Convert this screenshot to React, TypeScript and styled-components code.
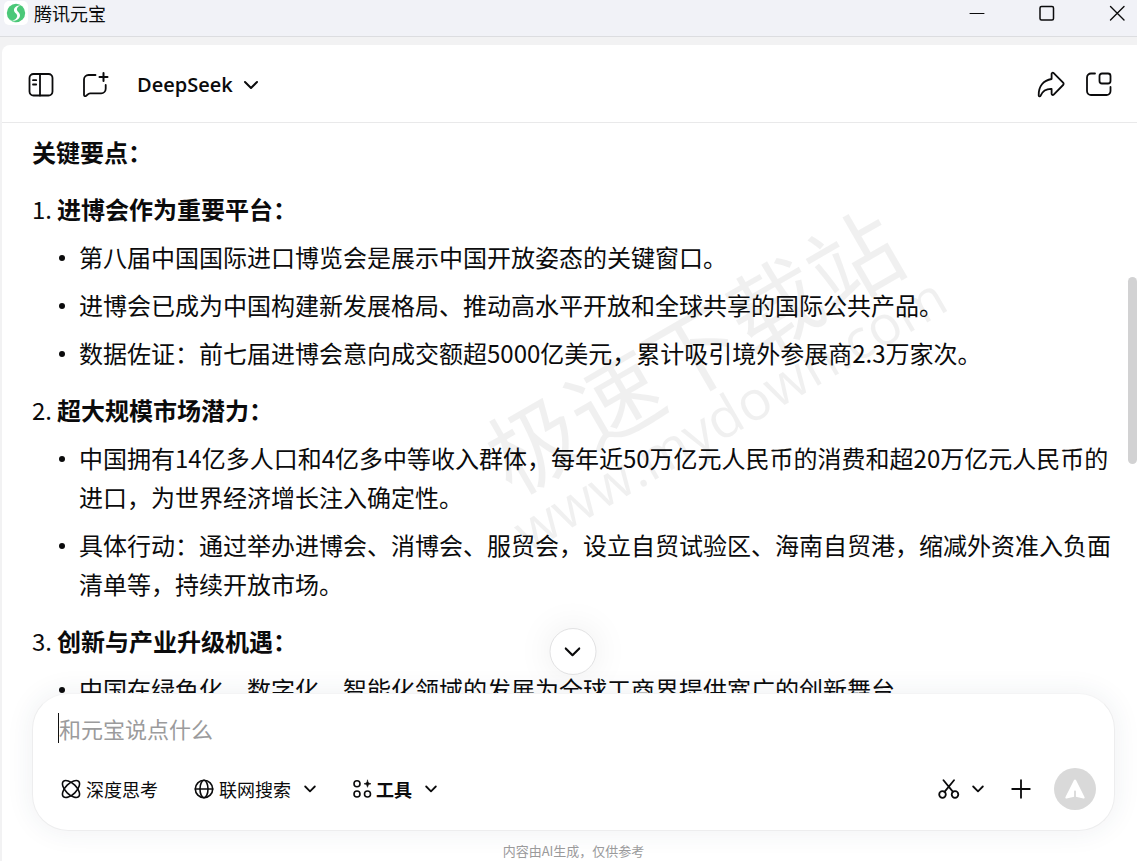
import React from "react";
import styled, { createGlobalStyle } from "styled-components";

const GlobalStyle = createGlobalStyle`
  * { box-sizing: border-box; }
  body {
    margin: 0;
    background: #f2f2f3;
    color: #0b0b0c;
    font-family: "Noto Sans CJK SC", sans-serif;
  }
  button {
    border: 0;
    padding: 0;
    background: none;
    color: inherit;
    font: inherit;
    cursor: pointer;
  }
  svg { display: block; flex: none; }
`;

const Window = styled.div`
  display: flex;
  flex-direction: column;
  height: 100vh;
  overflow: hidden;
`;

const TitleBar = styled.header`
  display: flex;
  flex: none;
  align-items: center;
  justify-content: space-between;
  height: 37px;
  padding: 0 12px 10px 4px;
  background: #f1f2f7;
  border-bottom: 1px solid #dcdde0;
`;

const AppName = styled.div`
  display: flex;
  align-items: center;
  gap: 6px;
  font-size: 18px;
  line-height: 26px;
`;

const WindowControls = styled.div`
  display: flex;
  align-items: center;
  gap: 54px;
`;

const IconButton = styled.button`
  display: flex;
  align-items: center;
  justify-content: center;
`;

const Panel = styled.main`
  display: flex;
  flex: 1;
  flex-direction: column;
  min-height: 0;
  margin: 8px 0 0 2px;
  background: #fff;
  border-top-left-radius: 8px;
`;

const Toolbar = styled.div`
  display: flex;
  flex: none;
  align-items: center;
  justify-content: space-between;
  height: 78px;
  padding: 2px 24px 0 26px;
  border-bottom: 1px solid #e9e9ea;
`;

const ToolbarGroup = styled.div<{ $gap: number }>`
  display: flex;
  align-items: center;
  gap: ${(p) => p.$gap}px;
`;

const ModelButton = styled.button`
  display: flex;
  align-items: center;
  gap: 10px;
  font-family: "Open Sans", sans-serif;
  font-size: 20px;
  font-weight: 600;
  line-height: 28px;
`;

const Conversation = styled.section`
  position: relative;
  flex: 1;
  min-height: 0;
`;

const Answer = styled.article`
  height: 100%;
  overflow: hidden;
  padding: 9px 23px 0 30px;
  font-size: 24px;
  line-height: 39px;
`;

const Lead = styled.h2`
  margin: 0;
  font-size: 24px;
  font-weight: 700;
`;

const Points = styled.ol`
  margin: 0;
  padding: 0;
  list-style: none;
`;

const Point = styled.li`
  margin-top: 18px;
`;

const PointTitle = styled.h3`
  display: flex;
  margin: 0;
  font-size: 24px;
  font-weight: 700;
`;

const PointNumber = styled.span`
  flex: none;
  width: 25px;
  font-weight: 400;
`;

const Details = styled.ul`
  margin: 0;
  padding: 0;
  list-style: none;
`;

const Detail = styled.li`
  display: flex;
  gap: 14px;
  margin-top: 9px;
  padding-left: 27px;

  &::before {
    content: "";
    flex: none;
    width: 6px;
    height: 6px;
    margin-top: 18px;
    border-radius: 50%;
    background: #0b0b0c;
  }
`;

const Watermark = styled.div`
  position: absolute;
  top: 250px;
  left: 704px;
  color: rgba(0, 0, 0, 0.06);
  text-align: center;
  white-space: nowrap;
  pointer-events: none;
  transform: translate(-50%, -50%) rotate(-30deg);
`;

const WatermarkName = styled.div`
  font-size: 92px;
  line-height: 92px;
`;

const WatermarkSite = styled.div`
  font-family: "Open Sans", sans-serif;
  font-size: 55px;
  line-height: 58px;
`;

const ScrollThumb = styled.div`
  position: absolute;
  top: 154px;
  right: 0;
  width: 9px;
  height: 187px;
  border-radius: 5px;
  background: #d2d2d3;
`;

const ScrollDown = styled.button`
  position: absolute;
  bottom: 18px;
  left: calc(50% + 3px);
  display: flex;
  align-items: center;
  justify-content: center;
  width: 47px;
  height: 47px;
  background: #fff;
  border: 1px solid #e2e2e3;
  border-radius: 50%;
  box-shadow: 0 0 36px rgba(0, 0, 0, 0.08);
  transform: translateX(-50%);
`;

const Footer = styled.footer`
  position: relative;
  flex: none;
  padding: 0 22px 0 30px;
`;

const Composer = styled.form`
  padding: 19px 18px 20px 25px;
  background: #fff;
  border: 1px solid #ededee;
  border-top-color: #f4f4f5;
  border-radius: 36px;
  box-shadow: 0 0 28px rgba(40, 70, 90, 0.08);
`;

const Prompt = styled.input`
  display: block;
  width: 100%;
  height: 30px;
  padding: 0;
  border: 0;
  border-left: 1px solid #111;
  outline: 0;
  background: none;
  color: #0b0b0c;
  font-family: inherit;
  font-size: 22px;

  &::placeholder { color: #9b9b9c; opacity: 1; }
`;

const Actions = styled.div`
  display: flex;
  align-items: center;
  justify-content: space-between;
  margin-top: 25px;
`;

const ModeGroup = styled.div`
  display: flex;
  gap: 36px;
  padding-left: 3px;
`;

const ModeButton = styled.button<{ $bold?: boolean }>`
  display: flex;
  align-items: center;
  font-size: 18px;
  font-weight: ${(p) => (p.$bold ? 700 : 400)};
  line-height: 26px;

  span { margin-left: ${(p) => (p.$bold ? 4 : 5)}px; }
  span + svg { margin-left: 13px; }
`;

const SendGroup = styled.div`
  display: flex;
  align-items: center;
  gap: 22px;
`;

const SnipButton = styled(IconButton)`
  gap: 12px;
  margin-right: 4px;
`;

const SendButton = styled(IconButton)`
  width: 42px;
  height: 42px;
  border-radius: 50%;
  background: #d9d9d9;
`;

const Notice = styled.p`
  margin: 10px 0 1px;
  color: #9a9a9b;
  font-size: 13px;
  line-height: 19px;
  text-align: center;
`;

type IconProps = {
  w: number;
  h: number;
  stroke?: number;
  children: React.ReactNode;
};

const Icon = ({ w, h, stroke = 2, children }: IconProps) => (
  <svg
    width={w}
    height={h}
    viewBox={`0 0 ${w} ${h}`}
    fill="none"
    stroke="currentColor"
    strokeWidth={stroke}
    strokeLinecap="round"
    strokeLinejoin="round"
    aria-hidden="true"
  >
    {children}
  </svg>
);

const Chevron = ({ large }: { large?: boolean }) =>
  large ? (
    <Icon w={16} h={10} stroke={2.2}>
      <path d="M1.2 1.5 8 8.2l6.800-6.700" />
    </Icon>
  ) : (
    <Icon w={12} h={8} stroke={1.8}>
      <path d="M1.200 1.500 6 6.300l4.800-4.800" />
    </Icon>
  );

const Logo = () => (
  <svg width="24" height="24" viewBox="0 0 24 24" aria-hidden="true">
    <rect width="24" height="24" rx="5" fill="#fff" />
    <circle cx="12" cy="12" r="9.200" fill="#4bc878" />
    <path
      d="M17 4.200C12 4.300 9.800 6.800 10 9.500c.2 2.500 3.400 3 3.200 5.600-.1 2.300-2.200 4.100-5.200 4.700 4.600.2 8-1.900 8-5.500 0-3-3.200-3.500-3.100-6 .1-1.900 1.700-3.500 4.100-4.100Z"
      fill="#fff"
    />
    <path d="M5 17.800c1.700 2.300 4.400 3.600 7.500 3.400-2.800-.6-5.200-1.500-7.500-3.400Z" fill="#a9efc2" />
  </svg>
);

const points = [
  {
    title: "进博会作为重要平台：",
    details: [
      "第八届中国国际进口博览会是展示中国开放姿态的关键窗口。",
      "进博会已成为中国构建新发展格局、推动高水平开放和全球共享的国际公共产品。",
      "数据佐证：前七届进博会意向成交额超5000亿美元，累计吸引境外参展商2.3万家次。",
    ],
  },
  {
    title: "超大规模市场潜力：",
    details: [
      "中国拥有14亿多人口和4亿多中等收入群体，每年近50万亿元人民币的消费和超20万亿元人民币的进口，为世界经济增长注入确定性。",
      "具体行动：通过举办进博会、消博会、服贸会，设立自贸试验区、海南自贸港，缩减外资准入负面清单等，持续开放市场。",
    ],
  },
  {
    title: "创新与产业升级机遇：",
    details: ["中国在绿色化、数字化、智能化领域的发展为全球工商界提供宽广的创新舞台。"],
  },
];

export default function App() {
  return (
    <Window>
      <GlobalStyle />
      <TitleBar>
        <AppName>
          <Logo />
          腾讯元宝
        </AppName>
        <WindowControls>
          <IconButton aria-label="最小化">
            <Icon w={16} h={16} stroke={1}>
              <path d="M1 8.500h14" />
            </Icon>
          </IconButton>
          <IconButton aria-label="最大化">
            <Icon w={16} h={16} stroke={1.5}>
              <rect x="1" y="1.500" width="13.500" height="13.500" rx="1.500" />
            </Icon>
          </IconButton>
          <IconButton aria-label="关闭">
            <Icon w={16} h={16} stroke={1.4}>
              <path d="m1.500 1.500 13.500 13.500M15 1.500 1.500 15" />
            </Icon>
          </IconButton>
        </WindowControls>
      </TitleBar>

      <Panel>
        <Toolbar>
          <ToolbarGroup $gap={28}>
            <IconButton aria-label="侧边栏">
              <Icon w={26} h={26} stroke={1.8}>
                <rect x="1.500" y="2" width="23" height="21.500" rx="4" />
                <path d="M12 2v21.500M5 8.200h3.200M5 12.500h3.200" />
              </Icon>
            </IconButton>
            <IconButton aria-label="新对话">
              <Icon w={27} h={28} stroke={1.8}>
                <path d="M13.500 4H6.500A4.500 4.500 0 0 0 2 8.500V24c0 1.200 1.300 1.500 2.200.8l2.300-1.900c.6-.5 1-.6 1.800-.6h10.900a4.500 4.500 0 0 0 4.500-4.500V14" />
                <path d="M21.500 2v8M17.500 6h8" strokeWidth="2" />
              </Icon>
            </IconButton>
            <ModelButton>
              DeepSeek
              <Icon w={16} h={10} stroke={2}>
                <path d="M2 2l6 6 6-6" />
              </Icon>
            </ModelButton>
          </ToolbarGroup>
          <ToolbarGroup $gap={20}>
            <IconButton aria-label="分享">
              <Icon w={28} h={28} stroke={1.8}>
                <path d="M14.600 2.800c0-1.100 1.300-1.500 2.100-.7l9.400 9.600c.7.700.7 1.600 0 2.300l-9.400 9.600c-.8.800-2.100.4-2.100-.8v-4.900c-5-.2-8.600 1.300-11.100 6.900-.4.900-1.700.7-1.800-.4C1.400 15.400 6.400 9.200 14.600 8Z" />
              </Icon>
            </IconButton>
            <IconButton aria-label="小窗">
              <Icon w={28} h={26} stroke={1.8}>
                <path d="M10 1.500H6A4 4 0 0 0 2 5.500v13.500a4 4 0 0 0 4 4h15.500a4 4 0 0 0 4-4v-4" />
                <rect x="14.500" y="1.500" width="11" height="10" rx="2.500" />
              </Icon>
            </IconButton>
          </ToolbarGroup>
        </Toolbar>

        <Conversation>
          <Answer>
            <Lead>关键要点：</Lead>
            <Points>
              {points.map((point, i) => (
                <Point key={point.title}>
                  <PointTitle>
                    <PointNumber>{i + 1}.</PointNumber>
                    {point.title}
                  </PointTitle>
                  <Details>
                    {point.details.map((text) => (
                      <Detail key={text}>
                        <span>{text}</span>
                      </Detail>
                    ))}
                  </Details>
                </Point>
              ))}
            </Points>
          </Answer>
          <Watermark>
            <WatermarkName>极速下载站</WatermarkName>
            <WatermarkSite>www.mydown.com</WatermarkSite>
          </Watermark>
          <ScrollThumb />
          <ScrollDown aria-label="滚动到底部">
            <Chevron large />
          </ScrollDown>
        </Conversation>

        <Footer>
          <Composer onSubmit={(e) => e.preventDefault()}>
            <Prompt aria-label="输入消息" placeholder="和元宝说点什么" />
            <Actions>
              <ModeGroup>
                <ModeButton type="button">
                  <Icon w={20} h={20} stroke={1.6}>
                    <ellipse cx="10" cy="10" rx="10.800" ry="5.400" transform="rotate(45 10 10)" />
                    <ellipse cx="10" cy="10" rx="10.800" ry="5.400" transform="rotate(-45 10 10)" />
                  </Icon>
                  <span>深度思考</span>
                </ModeButton>
                <ModeButton type="button">
                  <Icon w={20} h={20} stroke={1.6}>
                    <circle cx="10" cy="10" r="8.700" />
                    <ellipse cx="10" cy="10" rx="4" ry="8.700" />
                    <path d="M1.300 10h17.400" />
                  </Icon>
                  <span>联网搜索</span>
                  <Chevron />
                </ModeButton>
                <ModeButton type="button" $bold>
                  <Icon w={20} h={20} stroke={1.6}>
                    <circle cx="5" cy="4.800" r="3" />
                    <circle cx="5" cy="15" r="3" />
                    <circle cx="15.500" cy="15" r="3" />
                    <path
                      d="M15.500 1.200c.5 2.400 1.100 3 3.500 3.600-2.400.5-3 1.100-3.500 3.500-.5-2.400-1.100-3-3.500-3.500 2.400-.6 3-1.200 3.500-3.600Z"
                      fill="currentColor"
                      strokeWidth=".6"
                    />
                  </Icon>
                  <span>工具</span>
                  <Chevron />
                </ModeButton>
              </ModeGroup>
              <SendGroup>
                <SnipButton type="button" aria-label="截图">
                  <Icon w={22} h={20} stroke={1.8}>
                    <circle cx="4.500" cy="15.500" r="3.300" />
                    <circle cx="17" cy="15.500" r="3.300" />
                    <path d="M5.500 1.200 15 12.900M16 1.200 6.500 12.900" />
                  </Icon>
                  <Chevron />
                </SnipButton>
                <IconButton type="button" aria-label="添加">
                  <Icon w={22} h={20} stroke={1.8}>
                    <path d="M11 1.200v17.600M2.200 10h17.600" />
                  </Icon>
                </IconButton>
                <SendButton type="submit" aria-label="发送">
                  <svg width="20" height="20" viewBox="0 0 20 20" fill="#fff" aria-hidden="true">
                    <path d="M8.900 1.200c.4-.9 1.800-.9 2.200 0l8.400 16.700c.5 1-.2 1.800-1.200 1.500l-7.400-1.700V12.500c0-1.300-1.800-1.300-1.800 0v5.200l-7.400 1.700c-1 .3-1.700-.5-1.200-1.500Z" />
                  </svg>
                </SendButton>
              </SendGroup>
            </Actions>
          </Composer>
          <Notice>内容由AI生成，仅供参考</Notice>
        </Footer>
      </Panel>
    </Window>
  );
}
